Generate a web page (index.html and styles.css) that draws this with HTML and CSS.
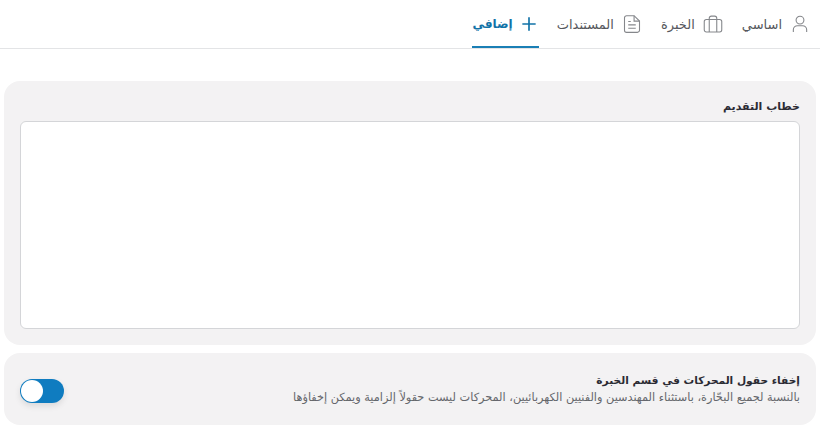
FILE: index.html
```html
<!DOCTYPE html>
<html lang="ar" dir="rtl">
<head>
    <meta charset="UTF-8">
    <meta name="viewport" content="width=device-width, initial-scale=1.0">
    <title>خطاب التقديم</title>
    <link rel="stylesheet" href="styles.css">
</head>
<body>
    <nav class="tabs">
        <a href="#" class="tab">
            <svg class="tab-icon" viewBox="0 0 24 24"><circle cx="12" cy="7.300" r="4.700"/><path d="M4 21.500v-2.500a5 5 0 0 1 5-5h6a5 5 0 0 1 5 5v2.500"/></svg>
            <span>اساسي</span>
        </a>
        <a href="#" class="tab">
            <svg class="tab-icon" viewBox="0 0 24 24"><rect x="1.500" y="6.500" width="21" height="15" rx="2.500"/><path d="M7.500 21.500V5a2.500 2.500 0 0 1 2.500-2.500h4A2.500 2.500 0 0 1 16.500 5v16.500"/></svg>
            <span>الخبرة</span>
        </a>
        <a href="#" class="tab">
            <svg class="tab-icon" viewBox="0 0 24 24"><path d="M14.500 2H5.500A2.500 2.500 0 0 0 3 4.500v15A2.500 2.500 0 0 0 5.500 22h13a2.500 2.500 0 0 0 2.500-2.500V8.500z"/><path d="M14.500 2v6.500H21M7.500 9h3M7.500 13h9M7.500 17h9"/></svg>
            <span>المستندات</span>
        </a>
        <a href="#" class="tab active">
            <svg class="tab-icon" viewBox="0 0 24 24"><path d="M12 4v16M4 12h16"/></svg>
            <span>إضافي</span>
        </a>
    </nav>

    <main class="content">
        <section class="card letter">
            <label class="field-label" for="letter">خطاب التقديم</label>
            <textarea id="letter" class="field"></textarea>
        </section>

        <section class="card option">
            <div class="option-text">
                <h3>إخفاء حقول المحركات في قسم الخبرة</h3>
                <p>بالنسبة لجميع البحّارة، باستثناء المهندسين والفنيين الكهربائيين، المحركات ليست حقولاً إلزامية ويمكن إخفاؤها</p>
            </div>
            <div class="toggle"><span class="knob"></span></div>
        </section>
    </main>
</body>
</html>
```

FILE: styles.css
```css
body {
    font-family: "DejaVu Sans", sans-serif;
    margin: 0;
    background-color: white;
    color: #2b2b33;
}
.tabs {
    display: flex;
    height: 48px;
    padding-right: 10px;
    gap: 19px;
    border-bottom: 1px solid #e3e4e6;
}
.tab {
    display: flex;
    align-items: center;
    gap: 8px;
    height: 48px;
    box-sizing: border-box;
    color: #55575c;
    font-size: 13px;
    text-decoration: none;
}
.tab-icon {
    width: 20px;
    height: 20px;
    fill: none;
    stroke: #85878b;
    stroke-width: 1.3;
}
.tab.active {
    gap: 6px;
    margin-right: -1px;
    color: #1273a8;
    font-size: 12px;
    font-weight: bold;
    border-bottom: 2px solid #1a7fb5;
    padding-top: 2px;
}
.tab.active .tab-icon {
    stroke: #1273a8;
    stroke-width: 2;
}
.content {
    padding: 32px 4px 0;
    display: flex;
    flex-direction: column;
    gap: 8px;
}
.card {
    background-color: #f3f2f3;
    border-radius: 16px;
    padding: 16px;
}
.letter {
    height: 264px;
    box-sizing: border-box;
    display: flex;
    flex-direction: column;
}
.field-label {
    font-size: 11px;
    font-weight: bold;
    height: 24px;
    line-height: 20px;
}
.field {
    flex: 1;
    background: white;
    border: 1px solid #d4d5d8;
    border-radius: 6px;
    resize: none;
}
.option {
    height: 72px;
    box-sizing: border-box;
    display: flex;
    align-items: center;
    justify-content: space-between;
}
.option-text h3 {
    margin: 0 0 5px;
    font-size: 10.600px;
    font-weight: bold;
}
.option-text p {
    margin: 0;
    font-size: 11.300px;
    color: #65676c;
}
.toggle {
    width: 44px;
    height: 24px;
    margin-top: 4px;
    border-radius: 12px;
    background-color: #0f7cc0;
    display: flex;
    align-items: center;
    padding: 0 1px;
    box-sizing: border-box;
    box-shadow: 0 3px 6px rgba(0, 0, 0, 0.1);
}
.knob {
    width: 22px;
    height: 22px;
    margin-right: auto;
    border-radius: 50%;
    background: white;
}
```
